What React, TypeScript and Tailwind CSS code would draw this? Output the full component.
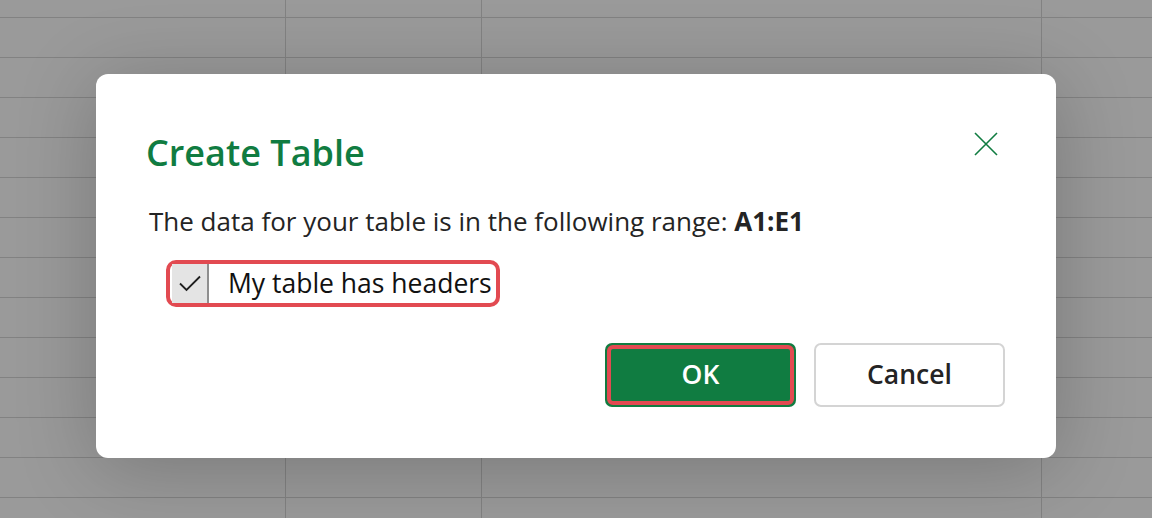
export default function App() {
  return (
    <div className="relative h-[518px] w-[1152px] overflow-hidden bg-[#9a9a9a] font-['Open_Sans',sans-serif]">
      {/* spreadsheet grid behind the dialog */}
      <div className="flex h-full bg-[image:repeating-linear-gradient(to_bottom,transparent_0px,transparent_17px,#828282_17px,#828282_18px,transparent_18px,transparent_40px)]">
        <div className="w-[286px] border-r border-[#828282]" />
        <div className="w-[196px] border-r border-[#828282]" />
        <div className="w-[560px] border-r border-[#828282]" />
        <div className="flex-1" />
      </div>

      {/* Create Table dialog */}
      <div className="absolute left-[96px] top-[74px] h-[384px] w-[960px] rounded-[12px] bg-white shadow-[0_10px_80px_rgba(0,0,0,0.22)]">
        <div className="flex items-start justify-between pl-[50px] pr-[58px] pt-[61px]">
          <h1 className="text-[36px] font-semibold leading-[1] text-[#107c41]">Create Table</h1>
          <button className="-mt-[3px] text-[#107c41]">
            <svg width="24" height="24" viewBox="0 0 24 24" fill="none" stroke="currentColor" strokeWidth="1.6">
              <path d="M1 1L23 23M23 1L1 23" />
            </svg>
          </button>
        </div>

        <p className="mt-[34px] pl-[53px] text-[26px] leading-[1.3] text-[#242424]">
          The data for your table is in the following range: <span className="font-bold">A1:E1</span>
        </p>

        <div className="ml-[70px] mt-[21px] inline-flex items-center rounded-[10px] border-[4px] border-[#e24a51] pr-[4px]">
          <div className="ml-[2px] flex h-[39px] w-[37px] items-center justify-center border-r-2 border-[#8f8f8f] bg-[#e4e4e4]">
            <svg width="24" height="24" viewBox="0 0 24 24" fill="none" stroke="#1f1f1f" strokeWidth="1.8">
              <path d="M2 12.5L8.5 19L22 5.5" />
            </svg>
          </div>
          <span className="ml-[19px] text-[26.5px] leading-[1] text-[#111111]">My table has headers</span>
        </div>

        <div className="mt-[36px] flex justify-end gap-[18px] pr-[51px]">
          <button className="h-[64px] w-[191px] rounded-[7px] bg-[#107c41] p-[2px]">
            <span className="flex h-full w-full items-center justify-center rounded-[6px] border-[4px] border-[#e24a51] text-[26.5px] font-semibold text-white">
              OK
            </span>
          </button>
          <button className="h-[64px] w-[191px] rounded-[7px] border-2 border-[#d4d4d4] bg-white text-[26.5px] font-semibold text-[#242424]">
            Cancel
          </button>
        </div>
      </div>
    </div>
  )
}
